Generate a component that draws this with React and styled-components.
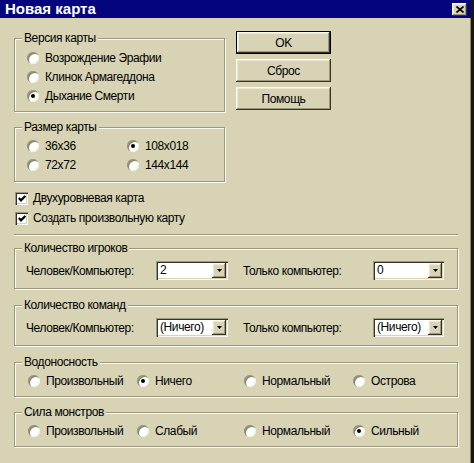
import React from 'react';
import styled, { createGlobalStyle } from 'styled-components';

const face = '#d7d3b4';
const shade = '#9c9880';
const light = '#fbfaf0';
const dark = '#34322a';

const GlobalStyle = createGlobalStyle`
  html, body {
    margin: 0;
    padding: 0;
    background: ${face};
  }
  body {
    font-family: "Liberation Sans", Arial, sans-serif;
    font-size: 12px;
    letter-spacing: -0.4px;
    color: #000;
  }
`;

const Window = styled.div`
  width: 474px;
  height: 463px;
  box-sizing: border-box;
  border-right: 3px solid #17160f;
  box-shadow: inset -1px 0 0 #8a8670;
  background: ${face};
  display: flex;
  flex-direction: column;
  overflow: hidden;
`;

const TitleBar = styled.div`
  height: 18px;
  flex-shrink: 0;
  background: #04047e;
  display: flex;
  align-items: center;
  justify-content: space-between;
  padding: 0 4px 0 5px;
`;

const Title = styled.div`
  color: #fff;
  font-weight: bold;
  font-size: 15px;
  letter-spacing: 0;
  line-height: 18px;
`;

const raised = `
  box-shadow:
    inset -1px -1px 0 ${dark},
    inset 1px 1px 0 ${light},
    inset -2px -2px 0 ${shade},
    inset 2px 2px 0 #ebe8d6;
`;

const sunken = `
  box-shadow:
    inset 1px 1px 0 ${shade},
    inset 2px 2px 0 ${dark},
    inset -1px -1px 0 ${light},
    inset -2px -2px 0 ${face};
`;

const CloseButton = styled.div`
  width: 15px;
  height: 13px;
  background: ${face};
  ${raised}
  display: flex;
  align-items: center;
  justify-content: center;
`;

const Body = styled.div`
  flex: 1;
  display: flex;
  flex-direction: column;
  padding: 13px 13px 0 14px;
`;

const TopRow = styled.div`
  display: flex;
  align-items: flex-start;
  gap: 11px;
`;

const LeftColumn = styled.div`
  width: 211px;
  display: flex;
  flex-direction: column;
`;

const ButtonColumn = styled.div`
  display: flex;
  flex-direction: column;
  gap: 5px;
`;

const Button = styled.button`
  width: 95px;
  height: 23px;
  box-sizing: border-box;
  margin: 0;
  padding: 0;
  font: inherit;
  letter-spacing: inherit;
  color: #000;
  background: ${face};
  border: ${({ $default }) => ($default ? '1px solid #000' : 'none')};
  ${raised}
`;

const Group = styled.div`
  position: relative;
  margin-top: ${({ $mt }) => $mt}px;
  border: 1px solid ${shade};
  box-shadow: inset 1px 1px 0 ${light}, 1px 1px 0 ${light};
  padding: ${({ $pad }) => $pad};
`;

const Caption = styled.span`
  position: absolute;
  top: -8px;
  left: 7px;
  padding: 0 2px;
  line-height: 14px;
  background: ${face};
  white-space: nowrap;
`;

const OptionGrid = styled.div`
  display: grid;
  grid-template-columns: ${({ $cols }) => $cols};
`;

const Option = styled.label`
  height: 19px;
  display: flex;
  align-items: center;
  gap: 6px;
  white-space: nowrap;
`;

const RadioMark = styled.span`
  position: relative;
  width: 12px;
  height: 12px;
  flex-shrink: 0;
  border-radius: 50%;
  background: #fff;
  box-shadow:
    inset 1px 1px 0 ${shade},
    inset 2px 2px 0 #8a8672,
    inset -1px -1px 0 #f2f0e2;
  &::after {
    content: '';
    display: ${({ $checked }) => ($checked ? 'block' : 'none')};
    position: absolute;
    left: 4px;
    top: 4px;
    width: 4px;
    height: 4px;
    border-radius: 50%;
    background: #000;
  }
`;

const CheckList = styled.div`
  margin-top: 6px;
  display: flex;
  flex-direction: column;
`;

const CheckOption = styled.label`
  height: 20px;
  display: flex;
  align-items: center;
  gap: 5px;
  padding-left: 1px;
  white-space: nowrap;
`;

const CheckMark = styled.span`
  width: 13px;
  height: 13px;
  flex-shrink: 0;
  background: #fff;
  ${sunken}
  display: flex;
  align-items: center;
  justify-content: center;
`;

const Separator = styled.div`
  margin-top: 6px;
  border-top: 1px solid ${shade};
  border-bottom: 1px solid ${light};
`;

const FieldRow = styled.div`
  display: flex;
  gap: 15px;
  padding-left: 11px;
`;

const Field = styled.div`
  height: 21px;
  display: flex;
  align-items: center;
`;

const FieldLabel = styled.span`
  width: 130px;
  white-space: nowrap;
`;

const Combo = styled.div`
  width: ${({ $w }) => $w}px;
  height: 19px;
  box-sizing: border-box;
  padding: 2px;
  background: #fff;
  ${sunken}
  display: flex;
`;

const ComboValue = styled.span`
  flex: 1;
  padding-left: 2px;
  line-height: 15px;
  white-space: nowrap;
  overflow: hidden;
`;

const ComboArrow = styled.span`
  width: 14px;
  height: 15px;
  background: ${face};
  ${raised}
  display: flex;
  align-items: center;
  justify-content: center;
`;

const Radio = ({ label, checked }) => (
  <Option>
    <RadioMark $checked={checked} />
    {label}
  </Option>
);

const Check = ({ label }) => (
  <CheckOption>
    <CheckMark>
      <svg width="8" height="7" viewBox="0 0 8 7">
        <polyline points="0.8,3 3,5.3 7.3,0.9" fill="none" stroke="#000" strokeWidth="2.2" />
      </svg>
    </CheckMark>
    {label}
  </CheckOption>
);

const Select = ({ value, width }) => (
  <Combo $w={width}>
    <ComboValue>{value}</ComboValue>
    <ComboArrow>
      <svg width="5" height="3" viewBox="0 0 5 3">
        <polygon points="0,0 5,0 2.5,3" fill="#000" />
      </svg>
    </ComboArrow>
  </Combo>
);

const RadioGroup = ({ title, mt, pad, cols, options, selected }) => (
  <Group $mt={mt} $pad={pad}>
    <Caption>{title}</Caption>
    <OptionGrid $cols={cols}>
      {options.map((o, i) => (
        <Radio key={o} label={o} checked={i === selected} />
      ))}
    </OptionGrid>
  </Group>
);

const CountGroup = ({ title, mt, value, other }) => (
  <Group $mt={mt} $pad="11px 0 7px 0">
    <Caption>{title}</Caption>
    <FieldRow>
      <Field>
        <FieldLabel>Человек/Компьютер:</FieldLabel>
        <Select value={value} width={72} />
      </Field>
      <Field>
        <FieldLabel>Только компьютер:</FieldLabel>
        <Select value={other} width={71} />
      </Field>
    </FieldRow>
  </Group>
);

const versions = ['Возрождение Эрафии', 'Клинок Армагеддона', 'Дыхание Смерти'];
const sizes = ['36x36', '108x018', '72x72', '144x144'];
const water = ['Произвольный', 'Ничего', 'Нормальный', 'Острова'];
const monsters = ['Произвольный', 'Слабый', 'Нормальный', 'Сильный'];
const wideCols = '109px 107px 109px auto';

export default function App() {
  return (
    <>
      <GlobalStyle />
      <Window>
        <TitleBar>
          <Title>Новая карта</Title>
          <CloseButton>
            <svg width="8" height="7" viewBox="0 0 8 7">
              <path d="M0.5 0.5 L7.5 6.5 M7.5 0.5 L0.5 6.5" stroke="#000" strokeWidth="1.6" />
            </svg>
          </CloseButton>
        </TitleBar>
        <Body>
          <TopRow>
            <LeftColumn>
              <RadioGroup
                title="Версия карты"
                mt={7}
                pad="9px 0 6px 12px"
                cols="auto"
                options={versions}
                selected={2}
              />
              <RadioGroup
                title="Размер карты"
                mt={15}
                pad="8px 0 7px 12px"
                cols="100px auto"
                options={sizes}
                selected={1}
              />
              <CheckList>
                <Check label="Двухуровневая карта" />
                <Check label="Создать произвольную карту" />
              </CheckList>
            </LeftColumn>
            <ButtonColumn>
              <Button $default>OK</Button>
              <Button>Сброс</Button>
              <Button>Помощь</Button>
            </ButtonColumn>
          </TopRow>
          <Separator />
          <CountGroup title="Количество игроков" mt={12} value="2" other="0" />
          <CountGroup title="Количество команд" mt={16} value="(Ничего)" other="(Ничего)" />
          <RadioGroup
            title="Водоносность"
            mt={16}
            pad="8px 0 6px 13px"
            cols={wideCols}
            options={water}
            selected={1}
          />
          <RadioGroup
            title="Сила монстров"
            mt={15}
            pad="8px 0 6px 13px"
            cols={wideCols}
            options={monsters}
            selected={3}
          />
        </Body>
      </Window>
    </>
  );
}
